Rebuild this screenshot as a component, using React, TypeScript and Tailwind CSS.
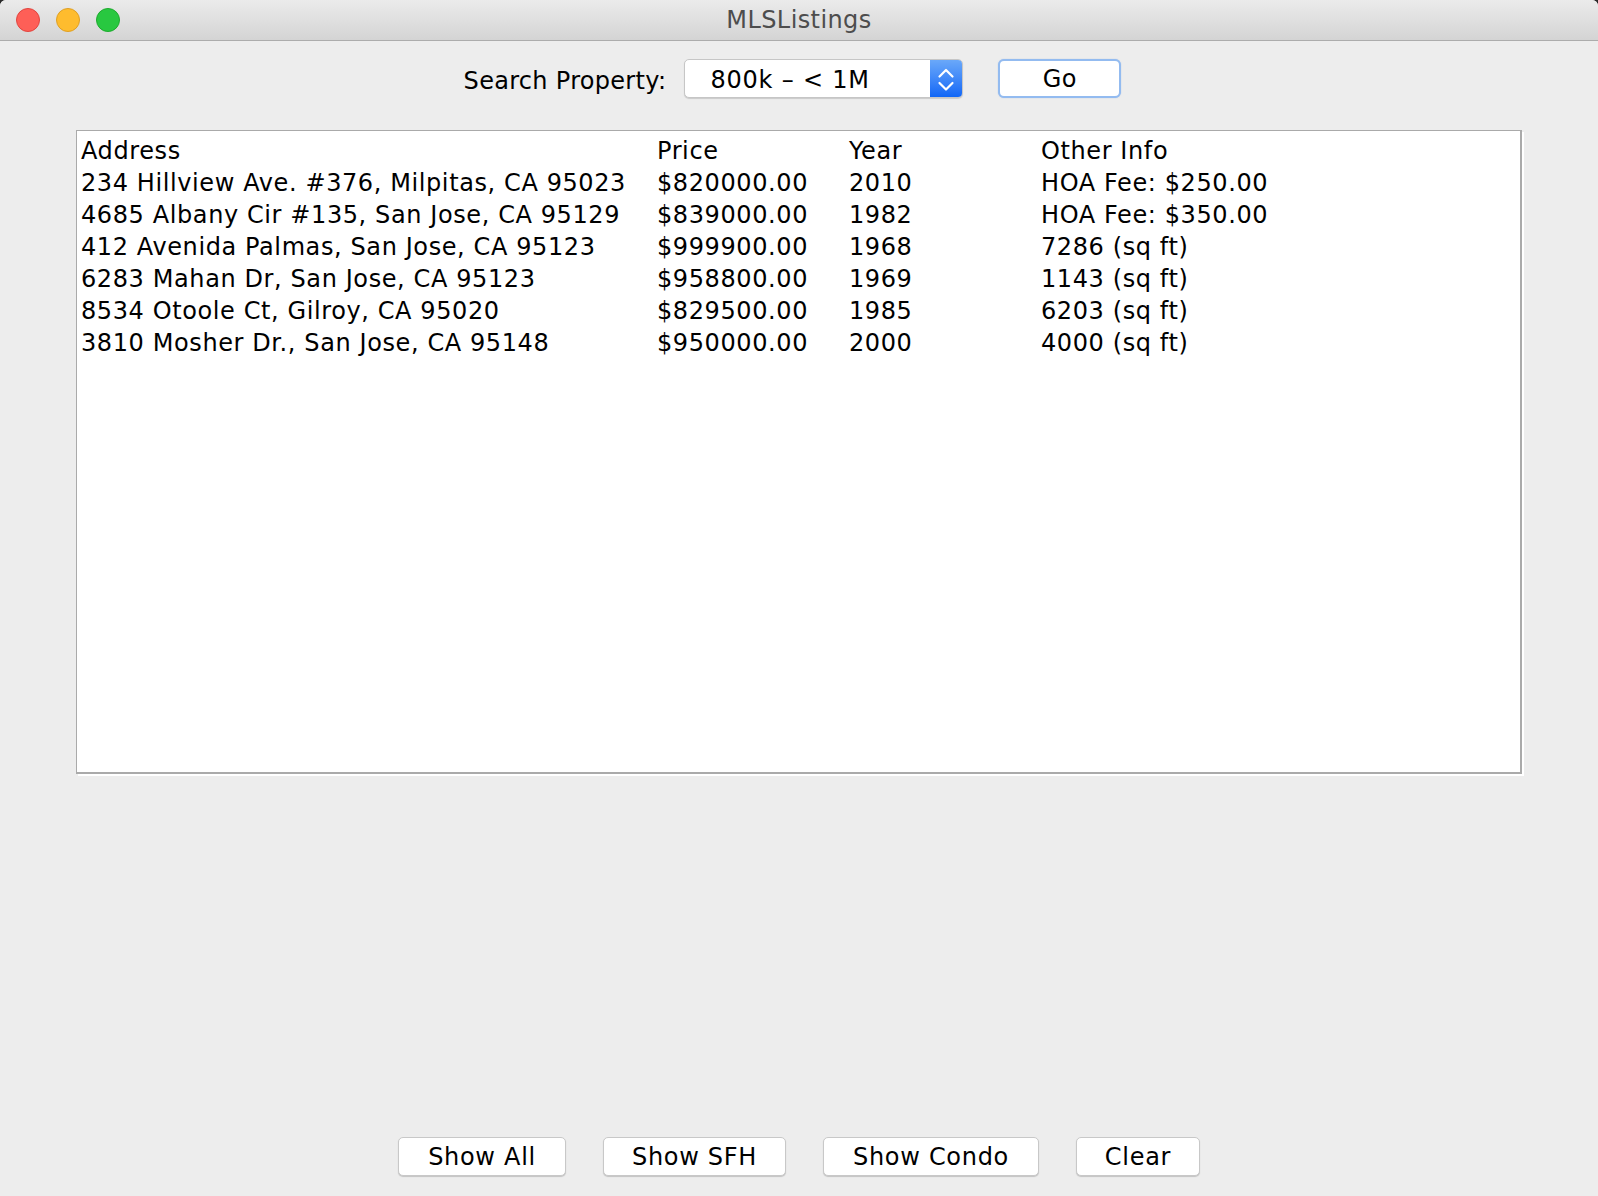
import React from "react";

const rows = [
  ["234 Hillview Ave. #376, Milpitas, CA 95023", "$820000.00", "2010", "HOA Fee: $250.00"],
  ["4685 Albany Cir #135, San Jose, CA 95129", "$839000.00", "1982", "HOA Fee: $350.00"],
  ["412 Avenida Palmas, San Jose, CA 95123", "$999900.00", "1968", "7286 (sq ft)"],
  ["6283 Mahan Dr, San Jose, CA 95123", "$958800.00", "1969", "1143 (sq ft)"],
  ["8534 Otoole Ct, Gilroy, CA 95020", "$829500.00", "1985", "6203 (sq ft)"],
  ["3810 Mosher Dr., San Jose, CA 95148", "$950000.00", "2000", "4000 (sq ft)"],
];

function Btn({ label, w }: { label: string; w: string }) {
  return (
    <div
      className={`${w} h-[39px] flex items-center justify-center rounded-[5px] border border-[#c8c8c8] bg-white shadow-[0_1px_1px_rgba(0,0,0,0.18)] text-[24px] leading-[28px] tracking-[0.7px] text-black`}
    >
      {label}
    </div>
  );
}

export default function App() {
  return (
    <div className="w-full h-[1196px] bg-[#2a2a2a] font-['DejaVu_Sans',sans-serif]">
      <div className="w-full h-[1196px] flex flex-col bg-[#ededed] rounded-t-[6px] overflow-hidden">
        {/* Title bar */}
        <div className="relative h-[41px] shrink-0 border-b border-[#acacac] bg-linear-to-b from-[#ebebeb] to-[#d4d4d4] flex items-center justify-center">
          <div className="absolute left-[16px] top-[8px] flex gap-[16px]">
            <div className="w-[24px] h-[24px] rounded-full bg-[#fe5f57] border border-[#e1453f]" />
            <div className="w-[24px] h-[24px] rounded-full bg-[#febc2e] border border-[#dfa024]" />
            <div className="w-[24px] h-[24px] rounded-full bg-[#28c840] border border-[#1dab2d]" />
          </div>
          <div className="text-[24px] leading-[28px] tracking-[0.4px] text-[#4d4d4d]">MLSListings</div>
        </div>

        {/* Search row */}
        <div className="mt-[18px] h-[39px] shrink-0 flex items-start justify-center pr-[13px]">
          <div className="h-[39px] pt-[6px] leading-[33px] text-[24px] tracking-[0.3px] text-black">Search Property:</div>
          <div className="ml-[18px] w-[279px] h-[39px] flex rounded-[5px] border border-[#c6c6c6] bg-white shadow-[0_1px_1px_rgba(0,0,0,0.15)] overflow-hidden">
            <div className="flex-1 pl-[25px] pt-[4px] leading-[33px] text-[24px] tracking-[0.8px] text-black">800k – &lt; 1M</div>
            <div className="w-[32px] h-full bg-linear-to-b from-[#6aa8f9] to-[#0f66f6]">
              <svg width="32" height="37" viewBox="0 0 32 37">
                <path d="M9.5 16.5 L16 10 L22.5 16.5" fill="none" stroke="#fff" strokeWidth="2.2" strokeLinecap="round" strokeLinejoin="round" />
                <path d="M9.5 23 L16 29.5 L22.5 23" fill="none" stroke="#fff" strokeWidth="2.2" strokeLinecap="round" strokeLinejoin="round" />
              </svg>
            </div>
          </div>
          <div className="ml-[35px] w-[123px] h-[39px] flex items-center justify-center rounded-[6px] border-2 border-[#93bbf0] bg-white text-[24px] leading-[28px] tracking-[0.4px] text-black shadow-[0_0_1px_rgba(80,140,230,0.5)]">
            Go
          </div>
        </div>

        {/* Table */}
        <div className="mt-[32px] ml-[76px] w-[1446px] h-[644px] shrink-0 bg-white border-t border-l border-r-2 border-b-2 border-[#aaaaaa] shadow-[2px_2px_0_0_#ffffff] pl-[4px] pt-[4px]">
          <div className="grid grid-cols-[576px_192px_192px_1fr] text-[24px] leading-[32px] tracking-[0.6px] text-black">
            <div>Address</div>
            <div>Price</div>
            <div>Year</div>
            <div>Other Info</div>
            {rows.map((r, i) => (
              <React.Fragment key={i}>
                <div className="whitespace-nowrap">{r[0]}</div>
                <div>{r[1]}</div>
                <div>{r[2]}</div>
                <div className="whitespace-nowrap">{r[3]}</div>
              </React.Fragment>
            ))}
          </div>
        </div>

        <div className="flex-1" />

        {/* Bottom buttons */}
        <div className="h-[39px] mb-[20px] shrink-0 flex justify-center gap-[37px]">
          <Btn label="Show All" w="w-[168px]" />
          <Btn label="Show SFH" w="w-[183px]" />
          <Btn label="Show Condo" w="w-[216px]" />
          <Btn label="Clear" w="w-[124px]" />
        </div>
      </div>
    </div>
  );
}
